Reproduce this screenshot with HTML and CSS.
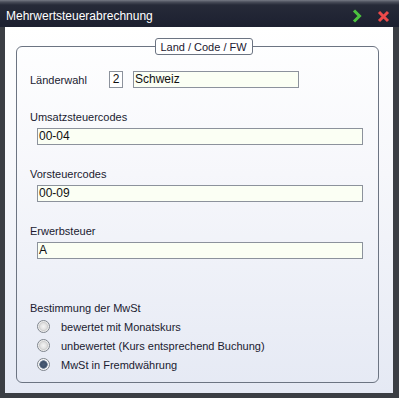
FILE: index.html
```html
<!DOCTYPE html>
<html>
<head>
<meta charset="utf-8">
<link rel="stylesheet" href="styles.css">
</head>
<body>
<div class="window">
  <div class="titlebar">
    <span class="title">Mehrwertsteuerabrechnung</span>
    <span class="tb-icons">
      <svg class="ic-next" width="10" height="14" viewBox="0 0 10 14"><path d="M2 1.5 L7.5 7 L2 12.5" fill="none" stroke="#4cc23e" stroke-width="3"/></svg>
      <svg class="ic-close" width="13" height="13" viewBox="0 0 13 13"><path d="M2 2 L11 11 M11 2 L2 11" fill="none" stroke="#ec4a4a" stroke-width="3"/></svg>
    </span>
  </div>
  <div class="client">
    <fieldset class="group">
      <legend class="legend">Land / Code / FW</legend>
      <div class="row-land">
        <span class="lbl lbl-land">Länderwahl</span>
        <span class="box box-nr">2</span>
        <span class="box box-name">Schweiz</span>
      </div>
      <div class="field first">
        <div class="lbl">Umsatzsteuercodes</div>
        <div class="box box-wide">00-04</div>
      </div>
      <div class="field">
        <div class="lbl">Vorsteuercodes</div>
        <div class="box box-wide">00-09</div>
      </div>
      <div class="field">
        <div class="lbl">Erwerbsteuer</div>
        <div class="box box-wide">A</div>
      </div>
      <div class="lbl lbl-mwst">Bestimmung der MwSt</div>
      <div class="radios">
        <div class="radio"><span class="dot"></span><span class="rlbl">bewertet mit Monatskurs</span></div>
        <div class="radio"><span class="dot"></span><span class="rlbl">unbewertet (Kurs entsprechend Buchung)</span></div>
        <div class="radio"><span class="dot checked"></span><span class="rlbl">MwSt in Fremdwährung</span></div>
      </div>
    </fieldset>
  </div>
</div>
</body>
</html>
```
FILE: styles.css
```css
html, body {
  margin: 0;
  padding: 0;
  background: #3a3c42;
}
.window {
  width: 399px;
  height: 398px;
  box-sizing: border-box;
  display: flex;
  flex-direction: column;
  background: #3b3e44;
  padding: 0 6px 5px 5px;
  font-family: "Liberation Sans", Arial, sans-serif;
}
.titlebar {
  height: 27px;
  margin: 0 -6px 0 -5px;
  padding: 0 9px 0 6px;
  box-sizing: border-box;
  display: flex;
  align-items: center;
  justify-content: space-between;
  background: linear-gradient(#777b85 0px, #4a4e5a 2px, #262a38 5px, #1c2030 27px);
}
.title {
  color: #ffffff;
  font-size: 12px;
  padding-top: 4px;
}
.tb-icons {
  display: flex;
  align-items: center;
  gap: 15px;
  padding-top: 5px;
}
.client {
  flex: 1;
  background: linear-gradient(#ffffff, #f6f7fb 40%, #e5e9f4);
  display: flex;
  padding: 11px 14px 10px 11px;
}
.group {
  flex: 1;
  margin: 0;
  padding: 0 0 6px 13px;
  border: 1px solid #6c7482;
  border-radius: 6px;
  min-width: 0;
  display: block;
}
.legend {
  margin: 0 auto;
  padding: 1px 5px 0 4px;
  height: 17px;
  box-sizing: border-box;
  border: 1px solid #6c7482;
  border-radius: 3px;
  background: #ffffff;
  font-size: 11px;
  color: #1c1830;
  line-height: 14px;
}
.lbl {
  font-size: 11px;
  line-height: 14px;
  color: #201a30;
}
.row-land {
  display: flex;
  align-items: center;
  margin-top: 16px;
  height: 17px;
}
.lbl-land {
  width: 79px;
}
.box {
  box-sizing: border-box;
  height: 17px;
  border: 1px solid #8c929c;
  background: #fbfff4;
  font-size: 12px;
  line-height: 15px;
  color: #101010;
  padding-left: 1px;
}
.box-nr {
  width: 14px;
  background: #ffffff;
  text-align: center;
  padding-left: 0;
  margin-right: 10px;
}
.box-name {
  width: 166px;
}
.field {
  margin-top: 22px;
}
.field.first {
  margin-top: 22px;
}
.field .box {
  margin-top: 4px;
}
.box-wide {
  width: 326px;
  margin-left: 7px;
}
.lbl-mwst {
  margin-top: 42px;
}
.radios {
  margin-top: 2px;
  padding-left: 7px;
}
.radio {
  height: 19px;
  display: flex;
  align-items: center;
}
.dot {
  width: 13px;
  height: 13px;
  box-sizing: border-box;
  border-radius: 50%;
  border: 1px solid #7e848c;
  background: radial-gradient(circle, #f4f4f4 0, #e2e2e2 3px, #cfcfcf 4px, #f8f8f8 5.5px);
  margin-right: 11px;
}
.dot.checked {
  background: radial-gradient(circle, #4c5e78 0, #3e5068 3px, #8090a4 4px, #f4f4f4 4.5px, #ffffff 6px);
}
.rlbl {
  font-size: 11px;
  color: #201a30;
}
```
